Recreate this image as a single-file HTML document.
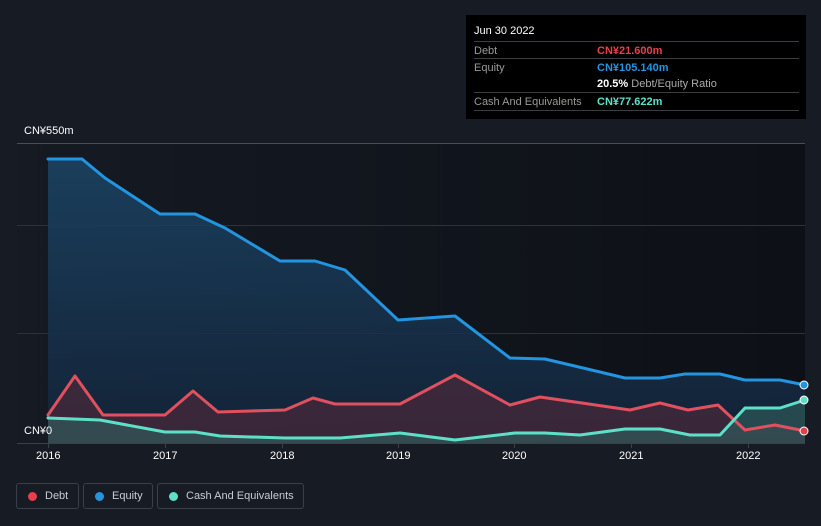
<!DOCTYPE html>
<html><head><meta charset="utf-8"><style>
body{margin:0;width:821px;height:526px;background:#161b24;font-family:"Liberation Sans",sans-serif;overflow:hidden;position:relative}
.t{position:absolute;font-size:11px;color:#fff}
.tip{position:absolute;left:466px;top:15px;width:340px;height:104px;background:#000}
.row{position:absolute;left:8px;width:325px;border-top:1px solid #3a3d44;height:17px}
.row span{position:absolute;top:3px;font-size:11px}
.lg{position:absolute;top:483px;height:26px;border:1px solid #3a3f4a;border-radius:3px;box-sizing:border-box;color:#c9ccd2;font-size:11px;line-height:25px}
.lg i{position:absolute;left:11px;top:8px;width:9px;height:9px;border-radius:50%}
</style></head><body>
<svg width="821" height="526" style="position:absolute;left:0;top:0">
<defs>
<linearGradient id="bg" x1="0" x2="1"><stop offset="0" stop-color="#151a23"/><stop offset="1" stop-color="#0d1016"/></linearGradient>
<linearGradient id="eq" x1="0" y1="0" x2="0" y2="1"><stop offset="0" stop-color="#1b4566"/><stop offset="1" stop-color="#13243a"/></linearGradient>
</defs>
<rect x="17" y="143" width="788" height="300" fill="url(#bg)"/>
<g stroke="#2c313a" stroke-width="1"><line x1="17" y1="143.5" x2="805" y2="143.5" stroke="#4a4e56"/><line x1="17" y1="225.5" x2="805" y2="225.5"/><line x1="17" y1="333.5" x2="805" y2="333.5"/></g>
<polygon fill="url(#eq)" opacity="0.85" points="48,443 48,159 82,159 105,178 160,214 195,214 225,228 280,261 315,261 345,270 398,320 455,316 510,358 545,359 600,372 625,378 660,378 685,374 720,374 745,380 780,380 805,385 805,443"/>
<polygon fill="#4a2a3a" opacity="0.7" points="48,443 48,415 75,376 103,415 165,415 193,391 218,412 285,410 313,398 335,404 400,404 455,375 510,405 540,397 575,402 630,410 660,403 688,410 718,405 745,430 775,425 805,431 805,443"/>
<polygon fill="#2f5a5a" opacity="0.7" points="48,443 48,418 100,420 165,432 195,432 220,436 285,438 340,438 400,433 455,440 515,433 545,433 580,435 625,429 660,429 690,435 720,435 745,408 780,408 805,400 805,443"/>
<g fill="none" stroke-width="3" stroke-linejoin="round" stroke-linecap="round">
<polyline stroke="#2394e0" points="48,159 82,159 105,178 160,214 195,214 225,228 280,261 315,261 345,270 398,320 455,316 510,358 545,359 600,372 625,378 660,378 685,374 720,374 745,380 780,380 805,385"/>
<polyline stroke="#e0505e" points="48,415 75,376 103,415 165,415 193,391 218,412 285,410 313,398 335,404 400,404 455,375 510,405 540,397 575,402 630,410 660,403 688,410 718,405 745,430 775,425 805,431"/>
<polyline stroke="#5ee0c8" points="48,418 100,420 165,432 195,432 220,436 285,438 340,438 400,433 455,440 515,433 545,433 580,435 625,429 660,429 690,435 720,435 745,408 780,408 805,400"/>
</g>
<line x1="17" y1="443.5" x2="805" y2="443.5" stroke="#3a3f48"/>
<g stroke="#3a3f48"><line x1="48.5" y1="443" x2="48.5" y2="448"/><line x1="165.5" y1="443" x2="165.5" y2="448"/><line x1="282.5" y1="443" x2="282.5" y2="448"/><line x1="398.5" y1="443" x2="398.5" y2="448"/><line x1="514.5" y1="443" x2="514.5" y2="448"/><line x1="631.5" y1="443" x2="631.5" y2="448"/><line x1="748.5" y1="443" x2="748.5" y2="448"/></g>
<circle cx="804" cy="385" r="4" fill="#2394e0" stroke="#fff" stroke-width="1"/>
<circle cx="804" cy="400" r="4" fill="#5ee0c8" stroke="#fff" stroke-width="1"/>
<circle cx="804" cy="431" r="4" fill="#e0404a" stroke="#fff" stroke-width="1"/>
</svg>
<div class="t" style="left:24px;top:125px">CN¥550m</div>
<div class="t" style="left:24px;top:425px">CN¥0</div>
<div class="t" style="left:36px;top:450px">2016</div>
<div class="t" style="left:153px;top:450px">2017</div>
<div class="t" style="left:270px;top:450px">2018</div>
<div class="t" style="left:386px;top:450px">2019</div>
<div class="t" style="left:502px;top:450px">2020</div>
<div class="t" style="left:619px;top:450px">2021</div>
<div class="t" style="left:736px;top:450px">2022</div>
<div class="tip">
<div class="t" style="left:8px;top:10px">Jun 30 2022</div>
<div class="row" style="top:26px"><span style="color:#999">Debt</span><span style="left:123px;color:#e8404a;font-weight:bold">CN¥21.600m</span></div>
<div class="row" style="top:43px"><span style="color:#999">Equity</span><span style="left:123px;color:#2394e0;font-weight:bold">CN¥105.140m</span></div>
<div class="row" style="top:60px;border-top:none"><span style="left:123px;color:#fff"><b>20.5%</b> <span style="position:static;color:#aaa">Debt/Equity Ratio</span></span></div>
<div class="row" style="top:77px;border-bottom:1px solid #3a3d44"><span style="color:#999">Cash And Equivalents</span><span style="left:123px;color:#5ee0c8;font-weight:bold">CN¥77.622m</span></div>
</div>
<div class="lg" style="left:16px;width:63px"><i style="background:#e8404a"></i><span style="position:absolute;left:28px">Debt</span></div>
<div class="lg" style="left:83px;width:70px"><i style="background:#2394e0"></i><span style="position:absolute;left:28px">Equity</span></div>
<div class="lg" style="left:157px;width:147px"><i style="background:#5ee0c8"></i><span style="position:absolute;left:28px">Cash And Equivalents</span></div>
</body></html>
